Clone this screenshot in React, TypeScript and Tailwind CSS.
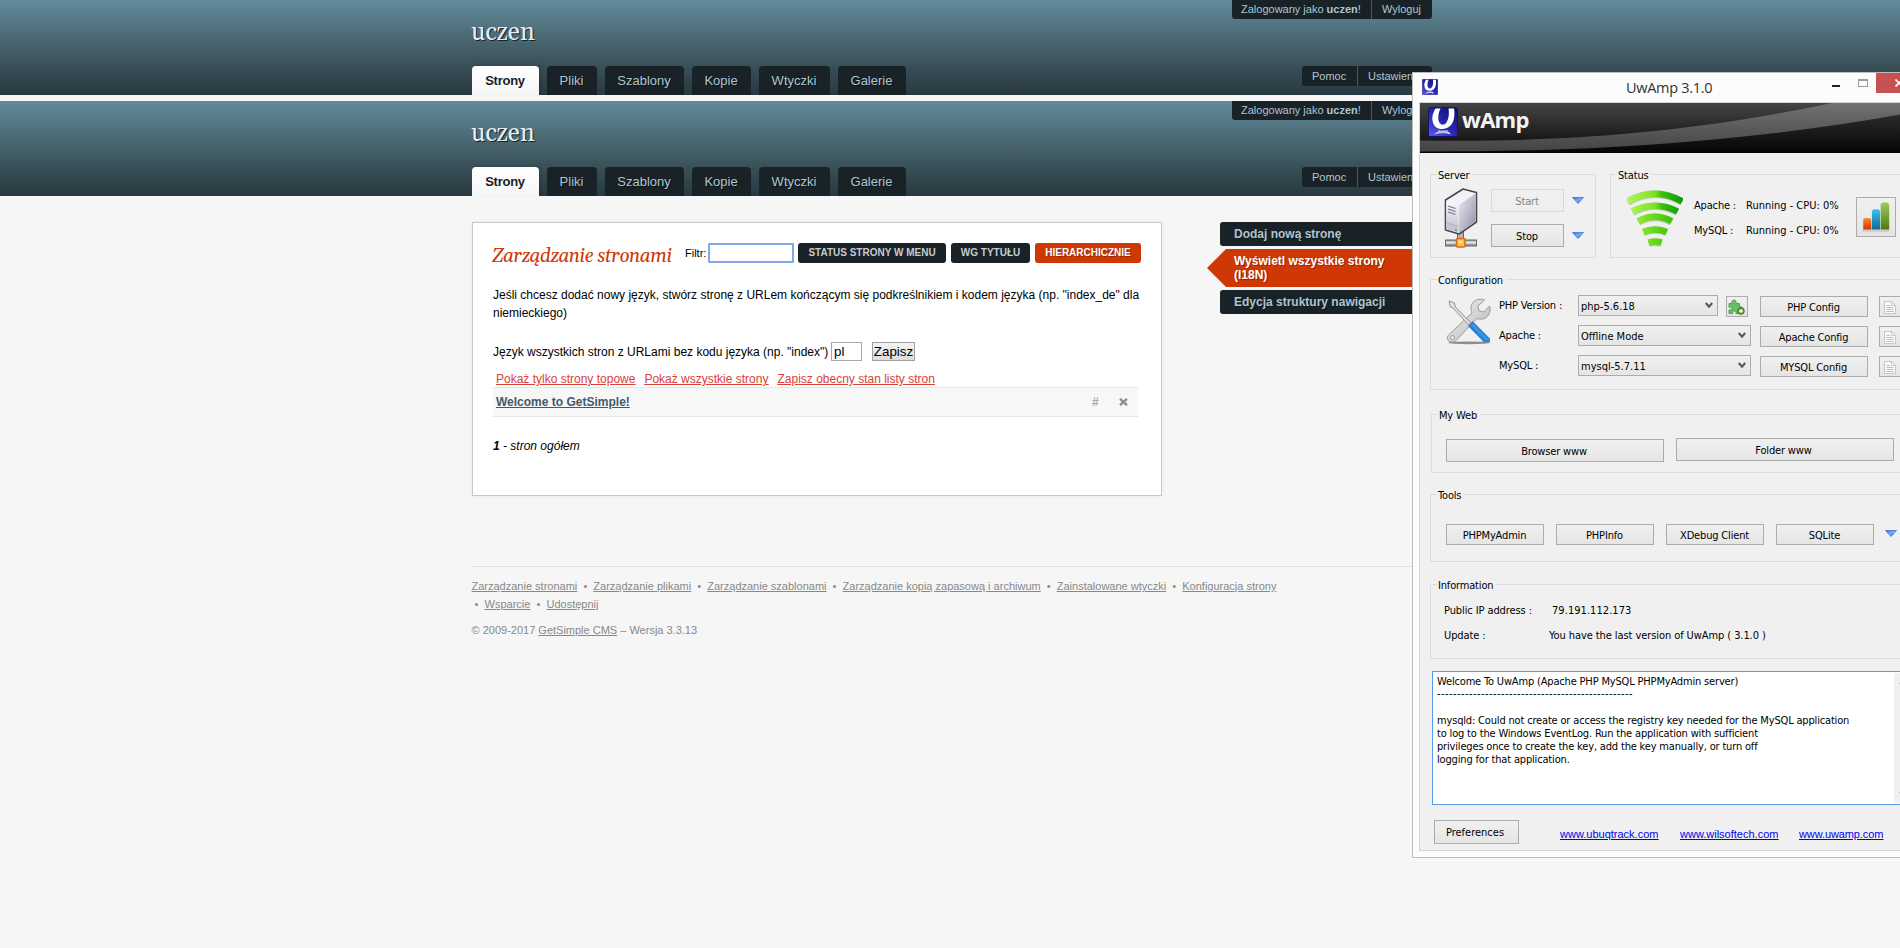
import type { ReactNode } from "react";

const tabs = [
  { label: "Strony", width: "w-[67px]", active: true },
  { label: "Pliki", width: "w-[50px]", active: false },
  { label: "Szablony", width: "w-[79px]", active: false },
  { label: "Kopie", width: "w-[59px]", active: false },
  { label: "Wtyczki", width: "w-[71px]", active: false },
  { label: "Galerie", width: "w-[68px]", active: false },
];

function Header() {
  return (
    <header className="h-[95px] shrink-0 bg-linear-to-b from-[#638b9c] via-[#456069] to-[#283840]">
      <div className="ml-[472px] flex h-full w-[960px] justify-between">
        <div className="flex flex-col justify-between">
          <h1 className="-ml-px pt-[18px] font-[Gelasio,Georgia,'Liberation_Serif',serif] text-[25px] leading-[30px] text-[#e8edf0] [text-shadow:1px_1px_0_#182227]">
            uczen
          </h1>
          <nav className="flex gap-2">
            {tabs.map((t) => (
              <a
                key={t.label}
                className={
                  "flex h-[29px] items-center justify-center rounded-t-[4px] pr-px text-[13px] " +
                  t.width +
                  (t.active
                    ? " bg-linear-to-b from-white to-[#f6f6f6] font-bold tracking-[-0.25px] text-[#182227] shadow-[2px_-1px_3px_rgba(0,0,0,0.15)]"
                    : " bg-[#182227] text-[#afc5cf] [text-shadow:1px_1px_0_#0e1316]")
                }
              >
                {t.label}
              </a>
            ))}
          </nav>
        </div>
        <div className="flex flex-col items-end gap-[47px] text-[11px] text-[#afc5cf]">
          <div className="flex h-[19px] w-[200px] rounded-b-[3px] bg-[#182227]">
            <span className="flex w-[140px] items-center border-r border-[#415a66] pl-[9px] whitespace-pre">
              Zalogowany jako <b>uczen</b>!
            </span>
            <span className="flex items-center pl-[10px]">Wyloguj</span>
          </div>
          <div className="flex h-[20px] w-[130px] rounded-[3px] bg-[#182227]">
            <span className="flex w-[56px] items-center border-r border-[#415a66] pl-[10px]">Pomoc</span>
            <span className="flex items-center pl-[10px]">Ustawienia</span>
          </div>
        </div>
      </div>
    </header>
  );
}

function PageCard() {
  return (
    <main className="h-[274px] w-[690px] border border-[#c8c8c8] bg-white pt-[20px] pl-[20px] text-[12px] leading-[18px] text-black shadow-[0_0_4px_rgba(0,0,0,0.06)]">
      <div className="flex h-[20px] items-center">
        <h2 className="w-[192px] -translate-x-px translate-y-[3px] font-[Gelasio,Georgia,'Liberation_Serif',serif] text-[19px] leading-[20px] tracking-[-0.48px] whitespace-nowrap text-[#cf3805] italic">
          Zarządzanie stronami
        </h2>
        <label className="w-[23px] text-[11px]">Filtr:</label>
        <div className="h-[20px] w-[86px] rounded-[1px] border-2 border-[#82a7ea] bg-white" />
        <div className="ml-[4px] flex gap-[5px] text-[10px] font-bold text-[#c8cccf]">
          <span className="flex h-[20px] w-[148px] items-center justify-center rounded-[3px] bg-[#182227]">STATUS STRONY W MENU</span>
          <span className="flex h-[20px] w-[79px] items-center justify-center rounded-[3px] bg-[#182227]">WG TYTUŁU</span>
          <span className="flex h-[20px] w-[106px] items-center justify-center rounded-[3px] bg-[#cf3805] text-white [text-shadow:1px_1px_0_rgba(0,0,0,0.3)]">
            HIERARCHICZNIE
          </span>
        </div>
      </div>
      <p className="mt-[23px] w-[655px]">
        Jeśli chcesz dodać nowy język, stwórz stronę z URLem kończącym się podkreślnikiem i kodem języka (np. "index_de" dla niemieckiego)
      </p>
      <div className="mt-[20px] flex h-[19px] items-center">
        <span className="w-[338px] whitespace-nowrap">Język wszystkich stron z URLami bez kodu języka (np. "index")</span>
        <span className="flex h-[19px] w-[31px] items-center border border-[#a9a9a9] pl-[2px] text-[13.33px]">pl</span>
        <span className="ml-[10px] flex h-[19px] w-[43px] items-center justify-center border border-[#a0a0a0] bg-linear-to-b from-[#f4f4f4] to-[#dddddd] text-[13.33px]">
          Zapisz
        </span>
      </div>
      <div className="mt-[9px] flex h-[17px] gap-[9px] pl-[3px] text-[#d94136] underline">
        <a>Pokaż tylko strony topowe</a>
        <a>Pokaż wszystkie strony</a>
        <a>Zapisz obecny stan listy stron</a>
      </div>
      <div className="flex h-[30px] w-[645px] items-center border-y border-[#e6e6e6] bg-[#f7f7f7]">
        <a className="flex-1 pl-[3px] font-bold text-[#415a66] underline">Welcome to GetSimple!</a>
        <span className="w-[27px] font-bold text-[#a8a8a8]">#</span>
        <svg className="mr-[10px]" width="9" height="8" viewBox="0 0 9 8">
          <path d="M1 0.8 8 7.2M8 0.8 1 7.2" stroke="#8f8f8f" strokeWidth="2.4" />
        </svg>
      </div>
      <p className="mt-[20px] italic">
        <b>1</b> - stron ogółem
      </p>
    </main>
  );
}

function Sidebar() {
  return (
    <aside className="flex w-[212px] flex-col gap-[3px] text-[12px] leading-[14px] font-bold text-[#afc5cf] [text-shadow:1px_1px_0_rgba(0,0,0,0.3)]">
      <a className="h-[24px] rounded-[3px] bg-[#182227] pt-[5px] pl-[14px]">Dodaj nową stronę</a>
      <a className="-ml-[13px] flex h-[38px] text-white">
        <svg width="19" height="38" viewBox="0 0 19 38">
          <path d="M19 0V38L0 19Z" fill="#cf3805" />
        </svg>
        <span className="flex-1 bg-[#cf3805] pt-[5px] pl-[8px]">
          Wyświetl wszystkie strony
          <br />
          (I18N)
        </span>
      </a>
      <a className="h-[24px] rounded-[3px] bg-[#182227] pt-[5px] pl-[14px]">Edycja struktury nawigacji</a>
    </aside>
  );
}

const footerLinks = [
  ["Zarządzanie stronami", "Zarządzanie plikami", "Zarządzanie szablonami", "Zarządzanie kopią zapasową i archiwum", "Zainstalowane wtyczki", "Konfiguracja strony"],
  ["Wsparcie", "Udostępnij"],
];
const bullet = "\u00a0\u00a0•\u00a0\u00a0";

function Footer() {
  return (
    <footer className="mt-[70px] ml-[472px] w-[960px] border-t border-[#e0e0e0] pt-[10px] text-[11px] leading-[18px] text-[#888888]">
      <div className="-ml-[0.5px] whitespace-pre">
        {footerLinks[0].map((l, i) => (
          <span key={l}>
            {i > 0 && bullet}
            <a className="underline">{l}</a>
          </span>
        ))}
      </div>
      <div className="-ml-[0.5px] whitespace-pre">
        {footerLinks[1].map((l, i) => (
          <span key={l}>
            {i === 0 ? bullet.slice(1) : bullet}
            <a className="underline">{l}</a>
          </span>
        ))}
      </div>
      <div className="mt-[8px] -ml-[0.5px]">
        © 2009-2017 <a className="underline">GetSimple CMS</a> – Wersja 3.3.13
      </div>
    </footer>
  );
}

function ULogo({ size, id }: { size: number; id: string }) {
  return (
    <svg width={size} height={size} viewBox="0 0 30 30" className="shrink-0">
      <defs>
        <linearGradient id={id} x1="0" y1="1" x2="0.8" y2="0">
          <stop offset="0" stopColor="#5a5ae8" />
          <stop offset="0.5" stopColor="#2a2ab4" />
          <stop offset="1" stopColor="#101078" />
        </linearGradient>
      </defs>
      <rect x="0.5" y="0.5" width="29" height="29" rx="2" fill={`url(#${id})`} stroke="#14146e" />
      <path d="M7.500 1.500C5.500 5 3.600 9 4.600 14C5.600 19.500 9 22 14 22C20 22 24 18.500 25.600 13C26.600 9.500 26.700 5 26 1.500L20.500 1.500C21.400 6 20.800 11 19 14.500C17.500 17.400 15.500 18.200 13.800 17.600C11.500 16.800 10.400 14.500 10.300 11.500C10.200 8 11 4.500 12.500 1.500Z" fill="#fff" />
      <path d="M6 27.500C8 24.800 12 23.500 15.500 23.500C19 23.500 21.500 25 23 27.500C19 25.800 10 25.800 6 27.500Z" fill="#d8d8fb" />
      <path d="M10 22.800C13 24.500 17 24.500 20 22.800L18 26H11Z" fill="#b9b9f4" />
    </svg>
  );
}

function Banner() {
  return (
    <div className="relative h-[50px] w-[488px]">
      <svg className="absolute inset-0" width="488" height="50" viewBox="0 0 488 50">
        <defs>
          <linearGradient id="bannerTop" x1="0" y1="0" x2="0" y2="1">
            <stop offset="0" stopColor="#454545" />
            <stop offset="0.7" stopColor="#1a1a1a" />
            <stop offset="1" stopColor="#050505" />
          </linearGradient>
          <linearGradient id="bannerBottom" x1="0" y1="0" x2="0" y2="1">
            <stop offset="0" stopColor="#2c2c2c" />
            <stop offset="1" stopColor="#050505" />
          </linearGradient>
          <linearGradient id="bannerBand" x1="0" y1="1" x2="0" y2="0">
            <stop offset="0" stopColor="#424242" />
            <stop offset="1" stopColor="#727272" />
          </linearGradient>
        </defs>
        <rect width="488" height="50" fill="url(#bannerTop)" />
        <path d="M0 37.500C160 40 290 26 412 0H488V50H0Z" fill="url(#bannerBand)" />
        <path d="M0 48.500C170 49 330 39 488 10V50H0Z" fill="url(#bannerBottom)" />
      </svg>
      <div className="relative flex pt-[4px] pl-[8px]">
        <ULogo size={30} id="logoLarge" />
        <span className="ml-[4px] font-['Open_Sans'] text-[22px] leading-[24px] font-bold tracking-[-0.7px] text-[#f4f4f4]">wAmp</span>
      </div>
    </div>
  );
}

function Group({ title, className, children }: { title: string; className: string; children: ReactNode }) {
  return (
    <fieldset className={"shrink-0 border border-[#dcdcdc] " + className}>
      <legend className="ml-[6px] pr-[3px] pl-px leading-[11px]">
        <span className="inline-block translate-y-px">{title}</span>
      </legend>
      {children}
    </fieldset>
  );
}

function Btn({ className, children }: { className: string; children: ReactNode }) {
  return (
    <button
      className={
        "flex shrink-0 items-center justify-center border border-[#acacac] bg-linear-to-b from-[#f0f0f0] to-[#e5e5e5] pt-px pr-px leading-[13px] whitespace-nowrap " + className
      }
    >
      {children}
    </button>
  );
}

function Triangle({ className }: { className: string }) {
  return (
    <svg className={"shrink-0 " + className} width="12" height="7" viewBox="0 0 12 7">
      <defs>
        <linearGradient id="tri" x1="0" y1="0" x2="0.7" y2="1">
          <stop offset="0" stopColor="#1f5cc8" />
          <stop offset="0.5" stopColor="#7fb0f4" />
          <stop offset="1" stopColor="#2a66cf" />
        </linearGradient>
      </defs>
      <path d="M0.500 0.500H11.500L6 6.500Z" fill="url(#tri)" stroke="#3a78dc" strokeWidth="0.8" />
    </svg>
  );
}

function ServerIcon() {
  return (
    <svg className="shrink-0" width="34" height="61" viewBox="0 0 34 61">
      <defs>
        <linearGradient id="srvSide" x1="0" y1="0" x2="1" y2="1">
          <stop offset="0" stopColor="#e9e9f2" />
          <stop offset="1" stopColor="#8f8fa6" />
        </linearGradient>
        <linearGradient id="srvFront" x1="0" y1="0" x2="0" y2="1">
          <stop offset="0" stopColor="#f8f8fc" />
          <stop offset="1" stopColor="#bcbccb" />
        </linearGradient>
        <linearGradient id="srvPipe" x1="0" y1="0" x2="0" y2="1">
          <stop offset="0" stopColor="#85858c" />
          <stop offset="0.4" stopColor="#ededf0" />
          <stop offset="1" stopColor="#6c6c74" />
        </linearGradient>
      </defs>
      <path d="M13.500 42H19.500V53H13.500Z" fill="#b5b5bd" stroke="#66666d" />
      <rect x="1.500" y="52" width="31" height="6" fill="url(#srvPipe)" stroke="#6a6a70" />
      <path d="M1.500 12L19 1L32.500 4.500V34L15 46L1.500 42Z" fill="#f2f2f8" stroke="#47474d" strokeWidth="1.600" strokeLinejoin="round" />
      <path d="M15 17L31.600 5.500V33.500L15 45Z" fill="url(#srvSide)" />
      <path d="M2.300 13L14.500 17V44.500L2.300 41.200Z" fill="url(#srvFront)" />
      <path d="M4 18L11.500 20.500M4 21L11.500 23.500M4 24L11.500 26.500" stroke="#77778a" strokeWidth="1.300" />
      <path d="M2.300 35L14.500 38.500" stroke="#a6a6b4" strokeWidth="0.700" />
      <circle cx="12" cy="42" r="0.900" fill="#34c234" />
      <rect x="12.500" y="50.500" width="8.500" height="8.500" rx="1" fill="#ffc14a" stroke="#e0661a" strokeWidth="1.600" />
      <rect x="14.500" y="52.500" width="3.500" height="3" fill="#ffe9a0" />
    </svg>
  );
}

const arcs = [
  "M0.8 11.500Q28 -4.200 55.200 11.500",
  "M5.500 21.500Q28 10 50.500 21.500",
  "M11.300 31.300Q28 22.300 44.700 31.300",
  "M16.300 42Q28 37 39.700 42",
  "M21.500 52.600Q28 50.600 34.500 52.600",
];

function SignalIcon() {
  return (
    <svg className="shrink-0" width="56" height="57" viewBox="0 0 56 57" fill="none">
      <defs>
        <linearGradient id="sig" gradientUnits="userSpaceOnUse" x1="0" y1="0" x2="56" y2="0">
          <stop offset="0" stopColor="#b4f65a" />
          <stop offset="0.5" stopColor="#7fe024" />
          <stop offset="0.62" stopColor="#3cc010" />
          <stop offset="1" stopColor="#0a9a05" />
        </linearGradient>
        <linearGradient id="sigLow" gradientUnits="userSpaceOnUse" x1="12" y1="0" x2="44" y2="0">
          <stop offset="0" stopColor="#8ceb28" />
          <stop offset="1" stopColor="#3cc40c" />
        </linearGradient>
      </defs>
      {arcs.map((d, i) => (
        <g key={d}>
          <path d={d} stroke="#5fae3c" strokeOpacity="0.45" strokeWidth="7.600" transform="translate(0 0.5)" />
          <path d={d} stroke={i < 2 ? "url(#sig)" : "url(#sigLow)"} strokeWidth="6.400" />
        </g>
      ))}
    </svg>
  );
}

function ChartIcon() {
  return (
    <svg width="28" height="31" viewBox="0 0 28 31">
      <defs>
        <linearGradient id="barA" x1="0" y1="0" x2="0" y2="1">
          <stop offset="0" stopColor="#f58a34" />
          <stop offset="1" stopColor="#d23408" />
        </linearGradient>
        <linearGradient id="barB" x1="0" y1="0" x2="0" y2="1">
          <stop offset="0" stopColor="#3cc0ee" />
          <stop offset="1" stopColor="#14698f" />
        </linearGradient>
        <linearGradient id="barC" x1="0" y1="0" x2="0" y2="1">
          <stop offset="0" stopColor="#9ccb5e" />
          <stop offset="1" stopColor="#4c7a12" />
        </linearGradient>
      </defs>
      <rect x="0.500" y="27" width="27" height="3" rx="1" fill="#cfcfcf" />
      <path d="M1.200 27.500V18.500Q1.200 16 4 16H6.500Q9.300 16 9.300 18.500V27.500Z" fill="url(#barA)" />
      <path d="M9.900 27.500V10Q9.900 7.200 12.700 7.200H15.300Q18.100 7.200 18.100 10V27.500Z" fill="url(#barB)" />
      <path d="M18.700 27.500V3Q18.700 0.500 21.500 0.500H24.500Q27.200 0.500 27.200 3V27.500Z" fill="url(#barC)" />
    </svg>
  );
}

function ToolsIcon() {
  return (
    <svg className="shrink-0" width="46" height="47" viewBox="0 0 46 47">
      <defs>
        <linearGradient id="blueGrip" x1="0" y1="1" x2="1" y2="0">
          <stop offset="0" stopColor="#0c4f9e" />
          <stop offset="0.5" stopColor="#2f8ade" />
          <stop offset="1" stopColor="#1a66ba" />
        </linearGradient>
        <linearGradient id="steel" x1="0" y1="0" x2="1" y2="1">
          <stop offset="0" stopColor="#f4f4f4" />
          <stop offset="1" stopColor="#b4b4b4" />
        </linearGradient>
      </defs>
      <ellipse cx="23" cy="44.800" rx="21" ry="1.400" fill="#8c8c8c" />
      <path
        d="M38.500 2C34 0 27.500 1.500 25.500 7C24.500 10 25 13 26 15L2.500 37C0.500 39.500 1.500 43.500 5 44C7.500 44.300 9 43.500 10.500 42L31 20.500C35 22 40 21 42.500 17C44.500 13.500 44.500 10.500 43.500 8L38 14L33 13L31.800 8Z"
        fill="url(#steel)"
        stroke="#9b9b9b"
        strokeWidth="1"
        strokeLinejoin="round"
      />
      <circle cx="6.500" cy="39.500" r="2" fill="#f0f0f0" stroke="#9b9b9b" />
      <path d="M3 3L8.500 5L9.500 9L25 25L22.500 27L7.500 10.500L4 8.500Z" fill="#dcdcdc" stroke="#909090" strokeWidth="0.900" />
      <path d="M22 28L26.500 23L44 40.500V44.200H38Z" fill="url(#blueGrip)" />
      <path d="M26.500 27L41 42" stroke="#6ab2ef" strokeWidth="0.800" />
    </svg>
  );
}

function PuzzleIcon() {
  return (
    <svg width="17" height="16" viewBox="0 0 17 16">
      <path
        d="M1 4.500H4.200C3.400 2.500 4.200 1 6 1C7.800 1 8.600 2.500 7.800 4.500H11.500V8C13.500 7.200 14.500 8 14.500 9.500C14.500 11.200 13.300 11.800 11.500 11V14.500H8C8.500 12.800 7.700 12 6.300 12C5 12 4.300 12.800 4.700 14.500H1V11C3 11.400 3.700 10.700 3.700 9.500C3.700 8.200 2.800 7.600 1 8.200Z"
        fill="#6abf63"
        stroke="#4fa44e"
      />
      <circle cx="13" cy="12" r="3.400" fill="#5a9a2e" stroke="#3c7420" strokeWidth="0.700" />
      <path d="M13 10V14M11 12H15" stroke="#fff" strokeWidth="1.300" />
    </svg>
  );
}

function DocIcon() {
  return (
    <svg width="12" height="13" viewBox="0 0 12 13">
      <path d="M0.500 0.500H7.500L11.500 4.500V12.500H0.500Z" fill="#fafafa" stroke="#c6c6c6" />
      <path d="M7.500 0.500V4.500H11.500" fill="none" stroke="#c6c6c6" />
      <path d="M2.500 4.500H6M2.500 6.500H9.500M2.500 8.500H9.500M2.500 10.500H9.500" stroke="#c0c0c0" />
    </svg>
  );
}

function Select({ value, className }: { value: string; className: string }) {
  return (
    <div className={"flex h-[21px] shrink-0 items-center justify-between border border-[#acacac] bg-linear-to-b from-[#f0f0f0] to-[#e5e5e5] pr-[4px] pl-[2px] leading-[13px] " + className}>
      <span className="translate-y-px tracking-[0px]">{value}</span>
      <svg width="8" height="7" viewBox="0 0 8 7">
        <path d="M0.800 1L4 4.700L7.200 1" fill="none" stroke="#555" strokeWidth="2" />
      </svg>
    </div>
  );
}

const configRows = [
  { label: "PHP Version :", value: "php-5.6.18", button: "PHP Config", extra: true },
  { label: "Apache :", value: "Offline Mode", button: "Apache Config", extra: false },
  { label: "MySQL :", value: "mysql-5.7.11", button: "MYSQL Config", extra: false },
];

const log = [
  "Welcome To UwAmp (Apache PHP MySQL PHPMyAdmin server)",
  "-------------------------------------------------",
  "",
  "mysqld: Could not create or access the registry key needed for the MySQL application",
  "to log to the Windows EventLog. Run the application with sufficient",
  "privileges once to create the key, add the key manually, or turn off",
  "logging for that application.",
];

function UwAmpWindow() {
  return (
    <section className="absolute top-[72px] left-[1412px] h-[786px] w-[488px] overflow-hidden border border-r-0 border-[#bdbdbd] bg-[#fcfcfc] font-['DejaVu_Sans_Condensed','DejaVu_Sans',sans-serif] text-[11px] leading-[13px] tracking-[-0.17px] text-black">
      <div className="flex h-[29px] w-[520px] items-start">
        <div className="pt-[6px] pl-[9px]">
          <ULogo size={16} id="logoSmall" />
        </div>
        <h3 className="ml-[188px] w-[87px] font-['Open_Sans',sans-serif] text-[14.5px] leading-[29px] tracking-[-0.3px] whitespace-nowrap text-[#333]">UwAmp 3.1.0</h3>
        <div className="mt-[12px] ml-[119px] h-[2px] w-[8px] bg-[#222]" />
        <div className="mt-[6px] ml-[18px] h-[8px] w-[10px] border border-t-2 border-[#9d9d9d]" />
        <div className="ml-[8px] flex h-[20px] w-[45px] items-center justify-center bg-[#c75050]">
          <svg width="8" height="8" viewBox="0 0 8 8">
            <path d="M0.500 0.500 7.500 7.500M7.500 0.500 0.500 7.500" stroke="#fff" strokeWidth="1.600" />
          </svg>
        </div>
      </div>
      <div className="ml-[6px] flex h-[749px] w-[520px] flex-col border border-[#d4d4d4] bg-[#f0f0f0]">
        <Banner />
        <div className="mt-[16px] flex pl-[10px]">
          <Group title="Server" className="h-[89px] w-[166px]">
            <div className="flex pt-[8px] pl-[13px]">
              <ServerIcon />
              <div className="mt-px ml-[13px] flex flex-col gap-[12px]">
                <Btn className="h-[23px] w-[73px] border-[#d9d9d9] bg-[#efefef] from-[#efefef] to-[#efefef] text-[#838383]">Start</Btn>
                <Btn className="h-[23px] w-[73px]">Stop</Btn>
              </div>
              <div className="mt-[9px] ml-[8px] flex flex-col gap-[28px]">
                <Triangle className="" />
                <Triangle className="" />
              </div>
            </div>
          </Group>
          <Group title="Status" className="ml-[14px] h-[89px] w-[330px]">
            <div className="flex pt-[10px] pl-[16px]">
              <SignalIcon />
              <div className="mt-[9px] ml-[11px] grid grid-cols-[52px_111px] content-start gap-y-[12px] whitespace-nowrap">
                <span>Apache :</span>
                <span className="tracking-[0px]">Running - CPU: 0%</span>
                <span>MySQL :</span>
                <span className="tracking-[0px]">Running - CPU: 0%</span>
              </div>
              <Btn className="mt-[7px] -ml-px h-[40px] w-[40px]">
                <ChartIcon />
              </Btn>
            </div>
          </Group>
        </div>
        <Group title="Configuration" className="mt-[16px] ml-[10px] h-[116px] w-[530px]">
          <div className="flex pt-[10px] pl-[15px]">
            <div className="pt-[3px]">
              <ToolsIcon />
            </div>
            <div className="ml-[7px] flex flex-col gap-[9px]">
              {configRows.map((r) => (
                <div key={r.label} className="flex h-[21px] items-center">
                  <span className="w-[79px]">{r.label}</span>
                  <Select value={r.value} className={r.extra ? "w-[140px]" : "w-[173px]"} />
                  {r.extra && (
                    <Btn className="mt-[2px] ml-[8px] h-[21px] w-[22px]">
                      <PuzzleIcon />
                    </Btn>
                  )}
                  <Btn className={"mt-[2px] h-[21px] w-[108px] " + (r.extra ? "ml-[12px]" : "ml-[9px]")}>{r.button}</Btn>
                  <Btn className="mt-[2px] ml-[11px] h-[21px] w-[22px]">
                    <DocIcon />
                  </Btn>
                </div>
              ))}
            </div>
          </div>
        </Group>
        <Group title="My Web" className="mt-[19px] ml-[11px] h-[64px] w-[530px]">
          <div className="flex gap-[12px] pt-[19px] pl-[14px]">
            <Btn className="h-[23px] w-[218px]">
              <span className="-ml-px">Browser www</span>
            </Btn>
            <Btn className="-mt-px h-[23px] w-[218px]">
              <span className="-ml-[2px]">Folder www</span>
            </Btn>
          </div>
        </Group>
        <Group title="Tools" className="mt-[16px] ml-[10px] h-[73px] w-[530px]">
          <div className="flex gap-[12px] pt-[24px] pl-[15px]">
            {["PHPMyAdmin", "PHPInfo", "XDebug Client", "SQLite"].map((t) => (
              <Btn key={t} className="h-[21px] w-[98px]">
                {t}
              </Btn>
            ))}
            <Triangle className="mt-[6px] -ml-px" />
          </div>
        </Group>
        <Group title="Information" className="mt-[17px] ml-[10px] h-[80px] w-[530px]">
          <div className="grid grid-cols-[105px_300px] gap-y-[12px] pt-[14px] pl-[13px]">
            <span className="tracking-[-0.1px]">Public IP address :</span>
            <span className="pl-[3px] tracking-[0.05px]">79.191.112.173</span>
            <span className="tracking-[-0.1px]">Update :</span>
            <span className="tracking-[-0.08px]">You have the last version of UwAmp ( 3.1.0 )</span>
          </div>
        </Group>
        <div className="mt-[12px] ml-[12px] flex h-[134px] shrink-0 justify-between border border-[#569de5] bg-white">
          <div className="pt-[3px] pl-[4px] whitespace-pre">
            {log.map((l, i) => (
              <div key={i} className={i === 1 ? "h-[13px] -translate-y-px tracking-[0.43px]" : "h-[13px]"}>
                {l}
              </div>
            ))}
          </div>
          <div className="m-px mr-[26px] flex w-[17px] flex-col items-center justify-between bg-[#f0f0f0] py-[6px]">
            <svg width="8" height="6" viewBox="0 0 8 6">
              <path d="M0.800 5L4 1.500L7.200 5" fill="none" stroke="#bfbfbf" strokeWidth="2" />
            </svg>
            <svg width="8" height="6" viewBox="0 0 8 6">
              <path d="M0.800 1L4 4.500L7.200 1" fill="none" stroke="#bfbfbf" strokeWidth="2" />
            </svg>
          </div>
        </div>
        <div className="mt-[15px] flex pl-[14px]">
          <Btn className="h-[24px] w-[85px]">
            <span className="-ml-[2px] tracking-[0px]">Preferences</span>
          </Btn>
          <div className="mt-[8px] ml-[41px] flex font-['Liberation_Sans',sans-serif] tracking-[0px] text-[#0000ee] underline">
            <a className="w-[120px]">www.ubuqtrack.com</a>
            <a className="w-[119px]">www.wilsoftech.com</a>
            <a className="tracking-[-0.1px]">www.uwamp.com</a>
          </div>
        </div>
      </div>
    </section>
  );
}

export default function App() {
  return (
    <div className="relative flex h-[948px] w-[1900px] flex-col overflow-hidden bg-[#f6f6f6] font-['Liberation_Sans',Arial,sans-serif]">
      <Header />
      <div className="h-[6px] shrink-0" />
      <Header />
      <div className="mt-[26px] ml-[472px] flex w-[960px] justify-between">
        <PageCard />
        <Sidebar />
      </div>
      <Footer />
      <UwAmpWindow />
    </div>
  );
}
